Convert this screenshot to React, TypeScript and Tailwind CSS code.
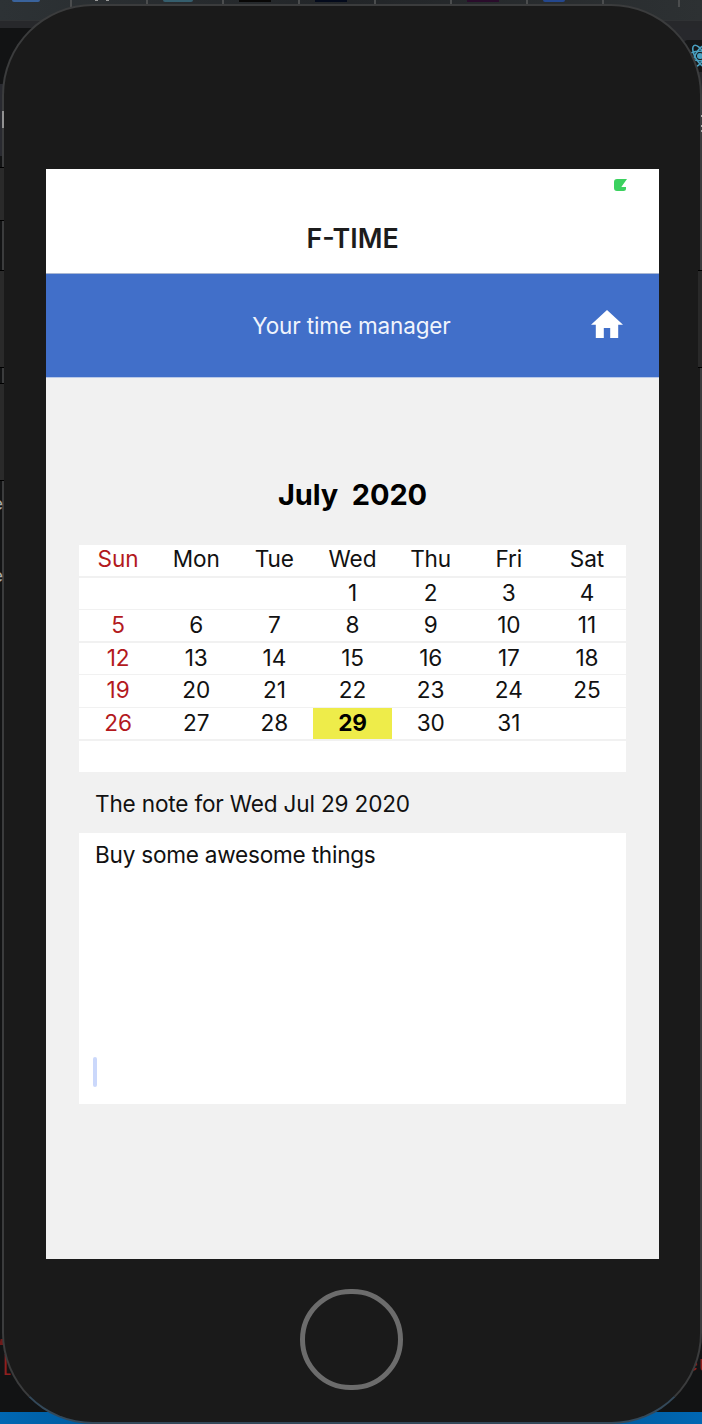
import React from "react";

const weekdays = ["Sun", "Mon", "Tue", "Wed", "Thu", "Fri", "Sat"];
const firstWeekday = 3;
const daysInMonth = 31;
const selectedDay = 29;
const bookmarkTabs = [
  "w-7 bg-[#3a639c] rounded-b",
  "",
  "w-[30px] bg-[#355e6d] rounded-b",
  "w-8 bg-[#080706]",
  "w-8 bg-[#030a1c]",
  "",
  "w-8 bg-[#2a0c2b]",
  "w-[22px] bg-[#24478d] rounded-b-lg",
  "",
];

function Desktop() {
  return (
    <div className="absolute inset-0 flex flex-col bg-[#121314]">
      <div className="flex h-5 shrink-0 overflow-hidden bg-linear-to-r from-[#2d3235] via-[#222528] to-[#2d3133]">
        {bookmarkTabs.map((icon, i) => (
          <div
            key={i}
            className={
              i === 0
                ? "flex h-[7px] w-[72px] shrink-0 items-start border-r-2 border-[#4b4d4e] pl-3"
                : "flex h-[7px] w-[76px] shrink-0 items-start border-r-2 border-[#4b4d4e] pl-[15px]"
            }
          >
            {icon && <div className={`h-0.5 ${icon}`} />}
            {i === 1 && (
              <div className="flex gap-2 pl-2">
                <div className="h-px w-[3px] bg-[#999]" />
                <div className="h-px w-[3px] bg-[#999]" />
              </div>
            )}
          </div>
        ))}
      </div>
      <div className="h-2 shrink-0 border-t border-[#303234] bg-[#27282b]" />
      <div className="flex flex-1 justify-between">
        <div className="flex w-3 flex-col">
          <div className="mt-14 h-[72px] bg-[#292a30]" />
        </div>
        <div className="h-[72px] w-10 bg-[#27282c]" />
      </div>
      <div className="h-3 shrink-0 bg-linear-to-r from-[#0067b3] via-[#003f6c] to-[#0067b3]" />

      <div className="absolute top-10 right-0 flex h-8 w-[18px] items-center overflow-hidden rounded-tl bg-[#151617] pl-[3px]">
        <svg viewBox="-13 -13 26 26" className="h-[26px] w-[26px] shrink-0" fill="none" stroke="#4aa0c0" strokeWidth="1.6">
          <ellipse rx="12" ry="4.7" />
          <ellipse rx="12" ry="4.7" transform="rotate(60)" />
          <ellipse rx="12" ry="4.7" transform="rotate(120)" />
          <circle r="3" fill="#4aa0c0" stroke="none" />
        </svg>
      </div>
      <div className="absolute top-[1353px] left-0 font-['Liberation_Mono',monospace] text-[22px] leading-6 text-[#8f1f1f]">[</div>
      <div className="absolute top-[1354px] left-[685px] w-[17px] overflow-hidden font-['Liberation_Mono',monospace] text-[22px] leading-6 whitespace-nowrap text-[#8f1f1f]">
        eu
      </div>
      <div className="absolute top-[1339px] left-0 h-1.5 w-1 -skew-x-12 bg-[#6f1a1a]" />
    </div>
  );
}

function PhoneEdges() {
  return (
    <>
      <div className="absolute top-[167px] left-0 h-[54px] w-1 border-y border-black bg-[#2a2a2a]" />
      <div className="absolute top-[270px] left-0 h-[98px] w-1 border-y border-black bg-[#2a2a2a]" />
      <div className="absolute top-[383px] left-0 h-[98px] w-1 border-y border-black bg-[#2a2a2a]" />
      <div className="absolute top-[270px] left-[698px] h-[98px] w-1 border-y border-black bg-[#292929]" />
      <div className="absolute top-[111px] left-[2px] h-[17px] w-0.5 bg-[#919191]" />
      <div className="absolute top-[115px] left-[701px] h-0.5 w-px bg-[#aaa]" />
      <div className="absolute top-[125px] left-[701px] h-0.5 w-px bg-[#aaa]" />
      <div className="absolute top-[130px] left-[701px] h-0.5 w-px bg-[#aaa]" />
      <div className="absolute top-[494px] left-0 flex h-5 w-[3px] justify-end overflow-hidden text-[18px] leading-5 text-[#aaa]">e</div>
      <div className="absolute top-[566px] left-0 flex h-5 w-[3px] justify-end overflow-hidden text-[18px] leading-5 text-[#aaa]">e</div>
    </>
  );
}

function Calendar() {
  const cells = Array.from({ length: 42 }, (_, i) => {
    const day = i - firstWeekday + 1;
    return day >= 1 && day <= daysInMonth ? day : null;
  });
  return (
    <div className="grid h-[227px] grid-cols-7 grid-rows-[31px_repeat(6,minmax(0,1fr))] gap-y-[1.5px] bg-[#f1f1f1] text-center text-[22.6px] tracking-[-0.1px] text-[#111]">
      {weekdays.map((d) => (
        <div key={d} className={d === "Sun" ? "bg-white leading-[28px] text-[#b3191d]" : "bg-white leading-[28px]"}>
          {d}
        </div>
      ))}
      {cells.map((day, i) => (
        <div
          key={i}
          className={
            day === selectedDay
              ? "bg-[#eeec4a] leading-[29px] font-bold text-black"
              : i % 7 === 0
                ? "bg-white leading-[29px] text-[#b3191d]"
                : "bg-white leading-[29px]"
          }
        >
          {day}
        </div>
      ))}
    </div>
  );
}

export default function App() {
  return (
    <div className="relative h-[1424px] w-[702px] overflow-hidden font-[Inter,sans-serif]">
      <Desktop />
      <div className="relative flex h-full pt-1 pl-0.5">
        <div className="flex h-[1420px] w-[700px] flex-col items-center rounded-[91px] border-2 border-[#3b3c3d] border-b-[#34495a] bg-[#1a1a1a] pt-[163px] pl-px">
          <main className="flex h-[1090px] w-[613px] shrink-0 flex-col bg-[#f1f1f1]">
            <header className="flex h-[105px] shrink-0 flex-col border-b border-[#a9b7d3] bg-white">
              <div className="flex h-8 justify-end pt-[10px] pr-8">
                <svg viewBox="0 0 13 12" className="h-3 w-[13px]" fill="#3bd15f">
                  <path d="M3 0H13L7.3 8H12V9.5Q12 12 9.5 12H3Q0 12 0 9V3Q0 0 3 0Z" />
                </svg>
              </div>
              <h1 className="pt-[19px] text-center text-[26.8px] leading-9 font-semibold text-[#1c1c1c]">F-TIME</h1>
            </header>
            <div className="grid h-[104px] shrink-0 grid-cols-[1fr_auto_1fr] items-center border-b border-[#b9c9e8] bg-[#416fc9] text-white">
              <div />
              <div className="pr-0.5 text-[22.5px] leading-8 tracking-[-0.14px] text-[#f0f4fc]">Your time manager</div>
              <div className="flex justify-end pr-9 pb-[3px]">
                <svg viewBox="2 3 20 17" preserveAspectRatio="none" className="h-7 w-8" fill="white">
                  <path d="M10 20v-6h4v6h5v-8h3L12 3 2 12h3v8z" />
                </svg>
              </div>
            </div>
            <h2 className="mt-[98px] mb-[31px] text-center text-[29px] leading-[38px] font-bold tracking-[-0.1px] whitespace-pre text-black">July  2020</h2>
            <div className="flex flex-col px-[33px]">
              <Calendar />
              <div className="h-[61px] pt-4 pl-4 text-[22.6px] leading-8 tracking-[-0.18px] text-[#111]">The note for Wed Jul 29 2020</div>
              <div className="flex h-[271px] flex-col justify-between bg-white pt-1.5 pb-[17px]">
                <div className="pl-4 text-[22.6px] leading-8 tracking-[-0.24px] text-[#111]">Buy some awesome things</div>
                <div className="ml-[14px] h-[30px] w-1 rounded-sm bg-[#cbd8fb]" />
              </div>
            </div>
          </main>
          <button aria-label="Home" className="mt-[30px] mr-0.5 h-[101px] w-[103px] rounded-full border-[5px] border-[#6c6c6c]" />
        </div>
      </div>
      <PhoneEdges />
    </div>
  );
}
